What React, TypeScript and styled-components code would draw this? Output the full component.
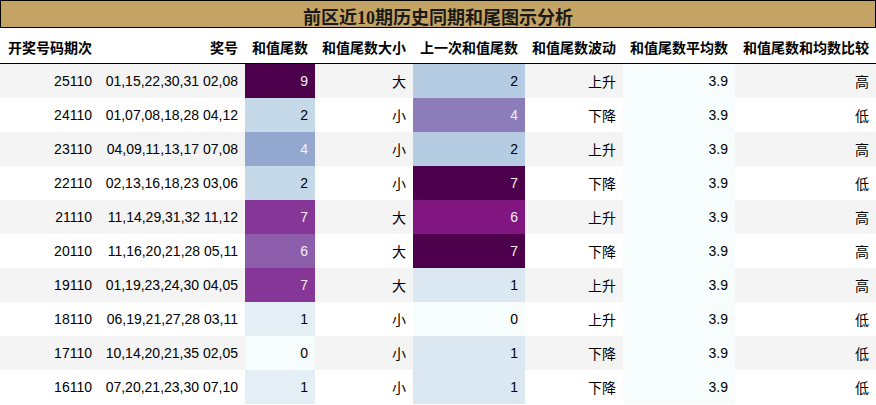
import React from "react";
import styled, { createGlobalStyle } from "styled-components";

const Global = createGlobalStyle`
  html, body { margin: 0; padding: 0; background: #fff; }
  body { font-family: "Liberation Sans", Arial, "Noto Sans CJK SC", sans-serif; }
`;

const COLS = "99px 146px 70px 98px 112px 98px 112px 141px";

const Wrap = styled.div`
  width: 876px;
  color: #000;
  font-size: 14px;
`;

const Title = styled.div`
  box-sizing: border-box;
  height: 28px;
  border: 1px solid #000;
  background: #c4a464;
  display: flex;
  align-items: center;
  justify-content: center;
  padding-top: 3px;
  font-family: "Liberation Serif", "Noto Sans CJK SC", serif;
  font-weight: bold;
  font-size: 18px;
  color: #1a1a1a;
`;

const HeadRow = styled.div`
  display: grid;
  grid-template-columns: ${COLS};
  height: 36px;
  box-sizing: border-box;
  border-bottom: 1px solid #000;
`;

const HeadCell = styled.div<{ $left?: boolean }>`
  display: flex;
  align-items: center;
  justify-content: ${(p) => (p.$left ? "flex-start" : "flex-end")};
  padding: 3px 7px 0 ${(p) => (p.$left ? "8px" : "7px")};
  font-weight: bold;
  white-space: nowrap;
  font-family: "Liberation Sans", "Noto Sans CJK SC", sans-serif;
`;

const Row = styled.div<{ $odd: boolean }>`
  display: grid;
  grid-template-columns: ${COLS};
  height: 34px;
  background: ${(p) => (p.$odd ? "#f4f4f4" : "#ffffff")};
`;

const Cell = styled.div<{ $bg?: string; $fg?: string }>`
  display: flex;
  align-items: center;
  justify-content: flex-end;
  padding: 0 7px;
  white-space: nowrap;
  background: ${(p) => p.$bg ?? "transparent"};
  color: ${(p) => p.$fg ?? "#000"};
`;

const stops = ["#f7fcfd", "#e0ecf4", "#bfd3e6", "#9ebcda", "#8c96c6", "#8c6bb1", "#88419d", "#810f7c", "#4d004b"];

function hex(c: string) {
  return [1, 3, 5].map((i) => parseInt(c.slice(i, i + 2), 16));
}

function mix(t: number) {
  const x = Math.max(0, Math.min(1, t)) * 8;
  const i = Math.min(7, Math.floor(x));
  const f = x - i;
  const a = hex(stops[i]);
  const b = hex(stops[i + 1]);
  return a.map((v, k) => v + (b[k] - v) * f);
}

function bupu(t: number): string {
  const c = mix(t).map((v) => Math.round(v));
  return `rgb(${c[0]},${c[1]},${c[2]})`;
}

function lum(t: number) {
  const c = mix(t).map((v) => v / 255);
  const lin = c.map((v) => (v <= 0.03928 ? v / 12.92 : Math.pow((v + 0.055) / 1.055, 2.4)));
  return 0.2126 * lin[0] + 0.7152 * lin[1] + 0.0722 * lin[2];
}

const data = [
  ["25110", "01,15,22,30,31 02,08", 9, "大", 2, "上升", "高"],
  ["24110", "01,07,08,18,28 04,12", 2, "小", 4, "下降", "低"],
  ["23110", "04,09,11,13,17 07,08", 4, "小", 2, "上升", "高"],
  ["22110", "02,13,16,18,23 03,06", 2, "小", 7, "下降", "低"],
  ["21110", "11,14,29,31,32 11,12", 7, "大", 6, "上升", "高"],
  ["20110", "11,16,20,21,28 05,11", 6, "大", 7, "下降", "高"],
  ["19110", "01,19,23,24,30 04,05", 7, "大", 1, "上升", "高"],
  ["18110", "06,19,21,27,28 03,11", 1, "小", 0, "上升", "低"],
  ["17110", "10,14,20,21,35 02,05", 0, "小", 1, "下降", "低"],
  ["16110", "07,20,21,23,30 07,10", 1, "小", 1, "下降", "低"],
] as const;

const headers = ["开奖号码期次", "奖号", "和值尾数", "和值尾数大小", "上一次和值尾数", "和值尾数波动", "和值尾数平均数", "和值尾数和均数比较"];

function grad(v: number, max: number) {
  const t = v / max;
  return { bg: bupu(t), fg: lum(t) < 0.408 ? "#f1f1f1" : "#000000" };
}

export default function App() {
  return (
    <Wrap>
      <Global />
      <Title>前区近10期历史同期和尾图示分析</Title>
      <HeadRow>
        {headers.map((h, i) => (
          <HeadCell key={h} $left={i === 0}>
            {h}
          </HeadCell>
        ))}
      </HeadRow>
      {data.map((r, i) => {
        const a = grad(r[2], 9);
        const b = grad(r[4], 7);
        const avg = grad(0, 1);
        return (
          <Row key={r[0]} $odd={i % 2 === 0}>
            <Cell>{r[0]}</Cell>
            <Cell>{r[1]}</Cell>
            <Cell $bg={a.bg} $fg={a.fg}>{r[2]}</Cell>
            <Cell>{r[3]}</Cell>
            <Cell $bg={b.bg} $fg={b.fg}>{r[4]}</Cell>
            <Cell>{r[5]}</Cell>
            <Cell $bg={avg.bg} $fg={avg.fg}>3.9</Cell>
            <Cell>{r[6]}</Cell>
          </Row>
        );
      })}
    </Wrap>
  );
}
